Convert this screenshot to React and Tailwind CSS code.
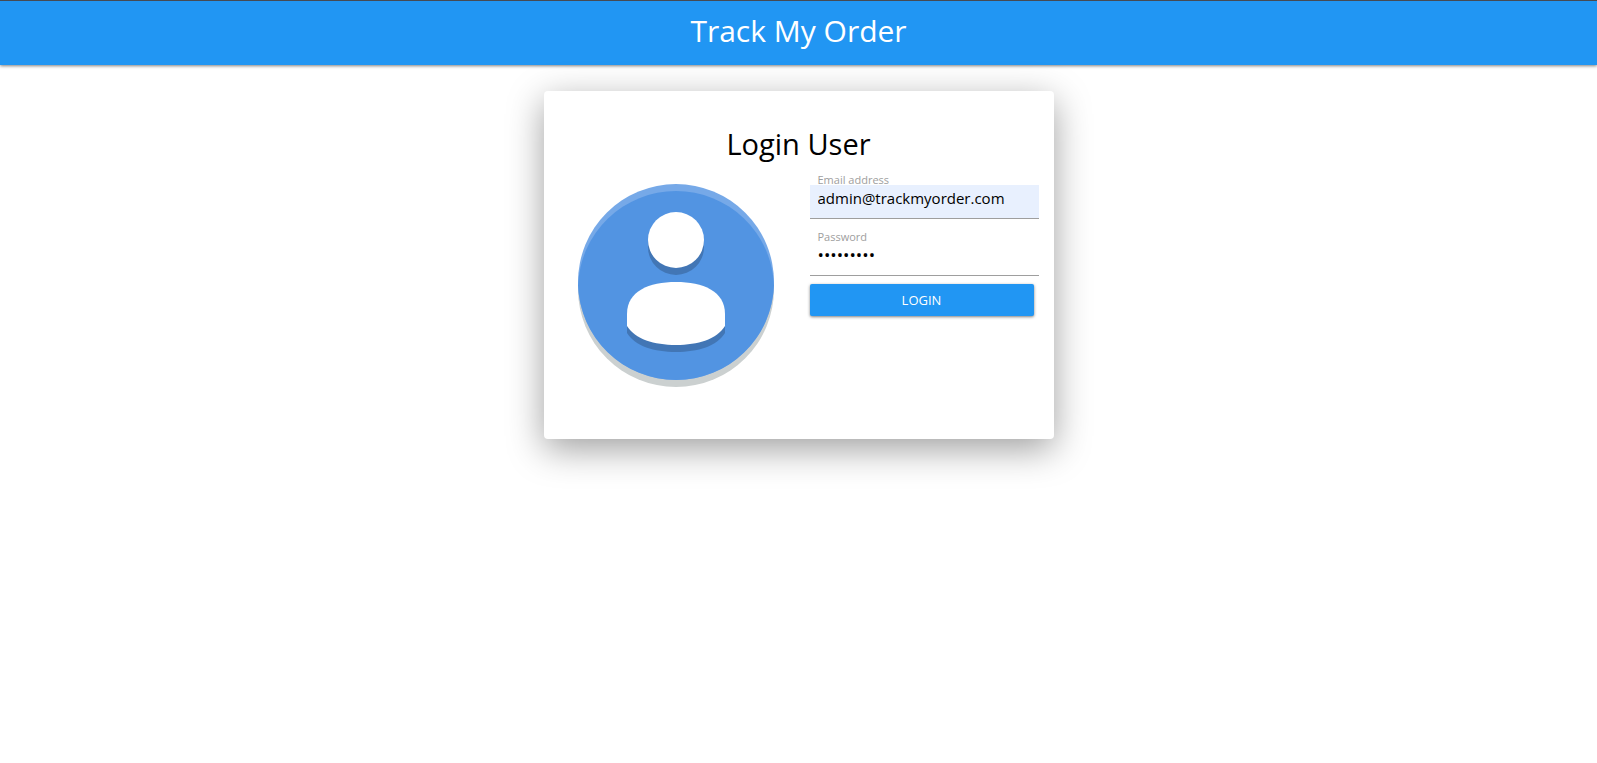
function Avatar() {
  return (
    <svg viewBox="0 0 196 203" className="h-[203px] w-[196px]" role="img" aria-label="User">
      <circle cx="98" cy="105" r="98" fill="#cbd0d0" />
      <circle cx="98" cy="98" r="98" fill="#76a9e8" />
      <path d="M.0625 101.500a98 98 0 0 1 195.875 0a98 98 0 0 1-195.875 0z" fill="#5294e2" />
      <g fill="#4276b5">
        <circle cx="98" cy="63" r="28" />
        <path d="M49 134c0-23 22-29 49-29s49 6 49 29v15c-8 13-27 19-49 19s-41-6-49-19z" />
      </g>
      <circle cx="98" cy="56" r="28" fill="#fff" />
      <path d="M49 130c0-23 22-32 49-32s49 9 49 32v12c-8 13-27 19-49 19s-41-6-49-19z" fill="#fff" />
    </svg>
  );
}

function Field({ id, label, type, value, inputClass }) {
  return (
    <div>
      <label htmlFor={id} className="block h-3 px-2 text-[11px] leading-[14px] text-[#9e9e9e]">
        {label}
      </label>
      <input
        id={id}
        type={type}
        defaultValue={value}
        className={
          "block h-[34px] w-full border-b border-[#9e9e9e] px-2 pb-2 leading-5 text-black outline-none " +
          inputClass
        }
      />
    </div>
  );
}

export default function App() {
  return (
    <div className="min-h-screen bg-white font-['Open_Sans','Noto_Sans',sans-serif] text-black">
      <header className="flex h-[65px] items-center justify-center border-t border-[#464a52] bg-[#2196f3] pb-1 shadow-[0_1px_3px_rgba(0,0,0,0.5)]">
        <h1 className="text-[30px] leading-10 text-white">Track My Order</h1>
      </header>
      <main className="px-4 pt-[26px] pb-16">
        <section className="mx-auto w-full max-w-[510px] rounded bg-white px-[15px] pt-8 pb-[52px] shadow-[0_10px_36px_rgba(0,0,0,0.38)]">
          <h2 className="text-center text-[29px] leading-[42px]">Login User</h2>
          <div className="mt-2 grid grid-cols-[235fr_229fr] gap-4">
            <div className="flex justify-center pt-[11px]">
              <Avatar />
            </div>
            <form onSubmit={(e) => e.preventDefault()}>
              <div className="flex flex-col gap-[11px]">
                <Field
                  id="email"
                  label="Email address"
                  type="email"
                  value="admin@trackmyorder.com"
                  inputClass="bg-[#e8f0fe] text-[15px]"
                />
                <Field
                  id="password"
                  label="Password"
                  type="password"
                  value="admin1234"
                  inputClass="bg-transparent text-[17px]"
                />
              </div>
              <div className="pt-2 pr-[5px]">
                <button
                  type="submit"
                  className="block h-8 w-full rounded-xs bg-[#2196f3] text-[13px] leading-5 text-white shadow-[0_1px_3px_rgba(0,0,0,0.5)]"
                >
                  LOGIN
                </button>
              </div>
            </form>
          </div>
        </section>
      </main>
    </div>
  );
}
